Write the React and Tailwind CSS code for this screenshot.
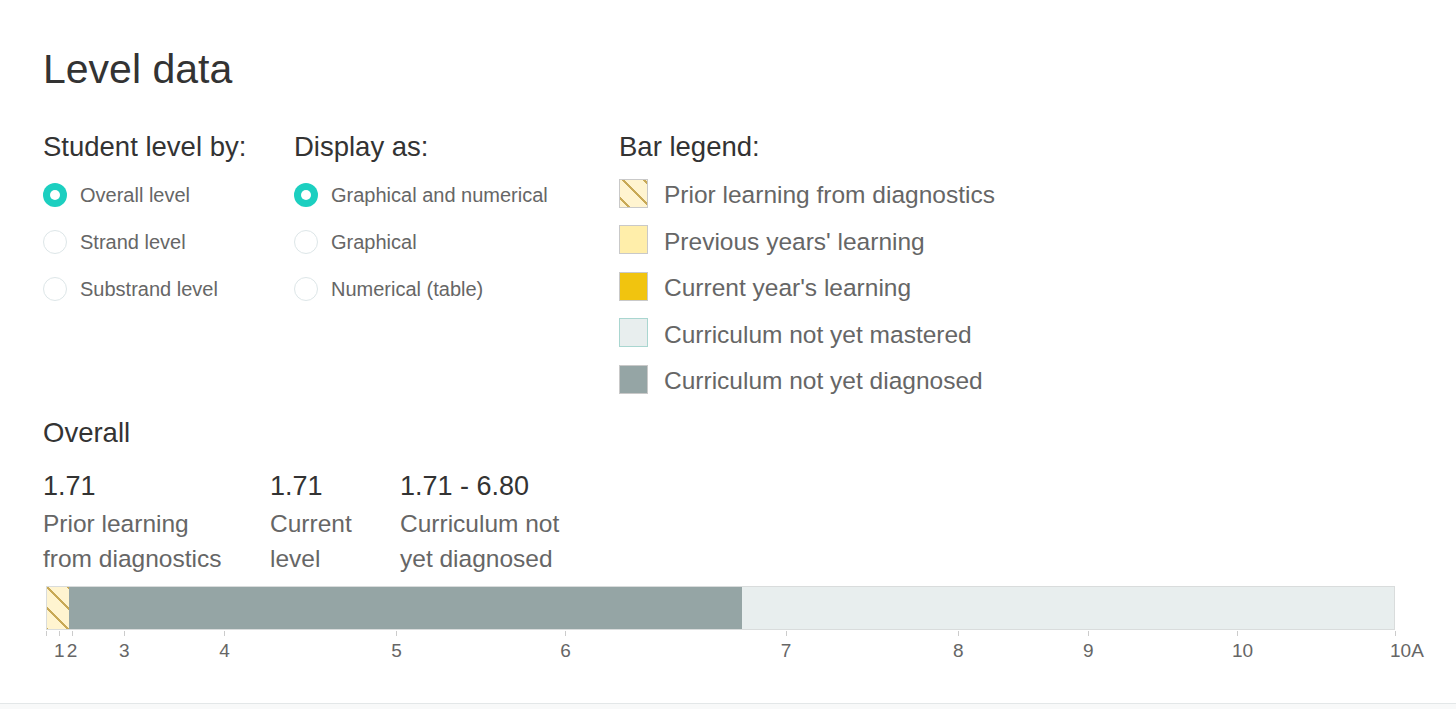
import React from "react";

const font = "font-['Liberation_Sans',Arial,sans-serif]";

function Radio({ checked, label }) {
  return (
    <div className="flex h-[47px] items-center gap-[13px]">
      {checked ? (
        <span className="flex h-6 w-6 items-center justify-center rounded-full bg-[#1ccfc0]">
          <span className="h-[10px] w-[10px] rounded-full bg-white" />
        </span>
      ) : (
        <span className="h-6 w-6 rounded-full border border-[#dde6e8] bg-white" />
      )}
      <span className="text-[20px] leading-[24px] text-[#666666]">{label}</span>
    </div>
  );
}

const hatch =
  "bg-[image:repeating-linear-gradient(45deg,#c8a956_0_1px,#fff4d0_1px_13.85px,#c8a956_13.85px_14.85px)] bg-[length:21px_21px]";

function LegendRow({ swatch, label }) {
  return (
    <div className="flex h-[46.5px] items-center gap-4">
      <span className={`h-[29px] w-[29px] shrink-0 border ${swatch}`} />
      <span className="pt-[4px] text-[24.5px] leading-[28px] text-[#666666]">{label}</span>
    </div>
  );
}

const ticks = [
  { x: 0, l: "" },
  { x: 13, l: "1" },
  { x: 25.7, l: "2" },
  { x: 78, l: "3" },
  { x: 178.3, l: "4" },
  { x: 350.3, l: "5" },
  { x: 519.3, l: "6" },
  { x: 739.7, l: "7" },
  { x: 912, l: "8" },
  { x: 1042, l: "9" },
  { x: 1191, l: "10" },
  { x: 1349, l: "10A" },
];

export default function App() {
  return (
    <div className={`min-h-[709px] bg-[#f8f9f9] ${font}`}>
      <div className="border-b border-[#e3e7e8] bg-white pl-[43px] pt-[45px] pb-[41px]">
        <h1 className="text-[41px] leading-[48px] font-normal text-[#333333]">Level data</h1>

        <div className="mt-[38px] flex">
          <div className="w-[251px]">
            <div className="text-[27.5px] leading-[32px] text-[#333333]">Student level by:</div>
            <div className="mt-[8px] flex flex-col">
              <Radio checked label="Overall level" />
              <Radio label="Strand level" />
              <Radio label="Substrand level" />
            </div>
          </div>
          <div className="w-[325px]">
            <div className="text-[27.5px] leading-[32px] text-[#333333]">Display as:</div>
            <div className="mt-[8px] flex flex-col">
              <Radio checked label="Graphical and numerical" />
              <Radio label="Graphical" />
              <Radio label="Numerical (table)" />
            </div>
          </div>
          <div>
            <div className="text-[27.5px] leading-[32px] text-[#333333]">Bar legend:</div>
            <div className="mt-[7px] flex flex-col">
              <LegendRow swatch={`border-[#c9c9c9] ${hatch} bg-[position:3px_0]`} label="Prior learning from diagnostics" />
              <LegendRow swatch="border-[#c9c9c9] bg-[#ffeeaa]" label="Previous years' learning" />
              <LegendRow swatch="border-[#c9c9c9] bg-[#f1c40f]" label="Current year's learning" />
              <LegendRow swatch="border-[#a9d6d0] bg-[#e8eeee]" label="Curriculum not yet mastered" />
              <LegendRow swatch="border-[#c9c9c9] bg-[#95a5a5]" label="Curriculum not yet diagnosed" />
            </div>
          </div>
        </div>

        <div className="mt-[14px] text-[27.5px] leading-[32px] text-[#333333]">Overall</div>

        <div className="mt-[21px] flex gap-[37px]">
          <div className="w-[190px]">
            <div className="text-[27px] leading-[32px] text-[#333333]">1.71</div>
            <div className="mt-[4px] text-[24.5px] leading-[35px] text-[#666666]">Prior learning from diagnostics</div>
          </div>
          <div className="w-[93px]">
            <div className="text-[27px] leading-[32px] text-[#333333]">1.71</div>
            <div className="mt-[4px] text-[24.5px] leading-[35px] text-[#666666]">Current level</div>
          </div>
          <div className="w-[170px]">
            <div className="text-[27px] leading-[32px] text-[#333333]">1.71 - 6.80</div>
            <div className="mt-[4px] text-[24.5px] leading-[35px] text-[#666666]">Curriculum not yet diagnosed</div>
          </div>
        </div>

        <div className="ml-[3px] mt-[10px] w-[1349px]">
          <div className="flex h-[44px] border border-[#d9dcdc] bg-[#e8eeee]">
            <div className={`w-[22px] ${hatch}`} />
            <div className="w-[673px] bg-[#95a5a5]" />
            <div className="flex-1" />
          </div>
          <div className="relative h-[32px]">
            {ticks.map((t) => (
              <React.Fragment key={t.x}>
                <span
                  className="absolute top-[1px] h-[5px] w-px bg-[#cccccc]"
                  style={{ left: `${t.x}px` }}
                />
                {t.l && (
                  <span
                    className="absolute top-[11px] text-[19px] leading-[20px] text-[#666666]"
                    style={{ left: `${t.x - 5}px` }}
                  >
                    {t.l}
                  </span>
                )}
              </React.Fragment>
            ))}
          </div>
        </div>
      </div>
    </div>
  );
}
